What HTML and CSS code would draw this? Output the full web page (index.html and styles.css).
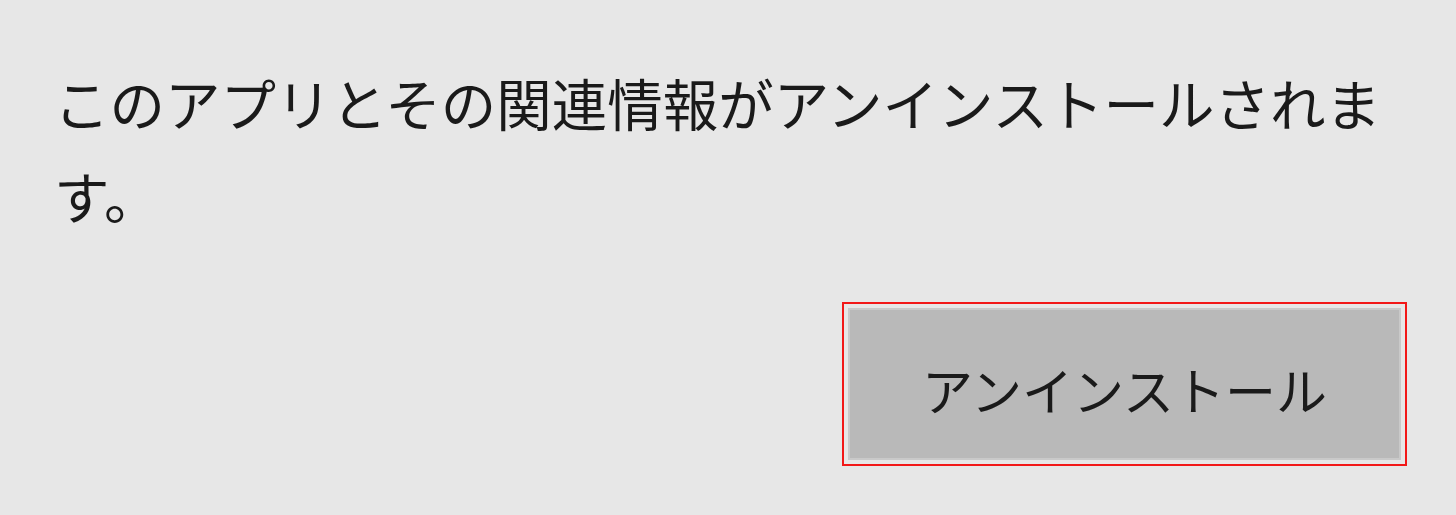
FILE: index.html
```html
<!DOCTYPE html>
<html lang="ja">
<head>
  <meta charset="UTF-8">
  <title>アンインストール</title>
  <link rel="stylesheet" href="styles.css">
</head>
<body>
  <div class="flyout">
    <p class="message">このアプリとその関連情報がアンインストールされます。</p>
    <div class="actions">
      <div class="highlight">
        <button class="uninstall-btn">アンインストール</button>
      </div>
    </div>
  </div>
</body>
</html>
```

FILE: styles.css
```css
/* Global */
body {
  margin: 0;
  padding: 0;
  background: #e7e7e7;
  font-family: "Noto Sans CJK JP", "Noto Sans", sans-serif;
  color: #1a1a1a;
}

/* Flyout */
.flyout {
  width: 1456px;
  height: 515px;
  box-sizing: border-box;
  padding: 56px 50px 0 54px;
}

.message {
  margin: 0;
  font-size: 55.5px;
  line-height: 93px;
}

.actions {
  display: flex;
  justify-content: flex-end;
  margin-top: 60px;
  margin-right: -1px;
}

/* red marker around the button */
.highlight {
  border: 2px solid #f21818;
  padding: 4px;
}

.uninstall-btn {
  display: block;
  width: 553px;
  height: 152px;
  margin: 0;
  padding: 10px 0 0;
  border: 2px solid #c9c9c9;
  background: #b9b9b9;
  font-family: "Noto Sans CJK JP", "Noto Sans", sans-serif;
  font-size: 51px;
  color: #1a1a1a;
  cursor: pointer;
}
```
